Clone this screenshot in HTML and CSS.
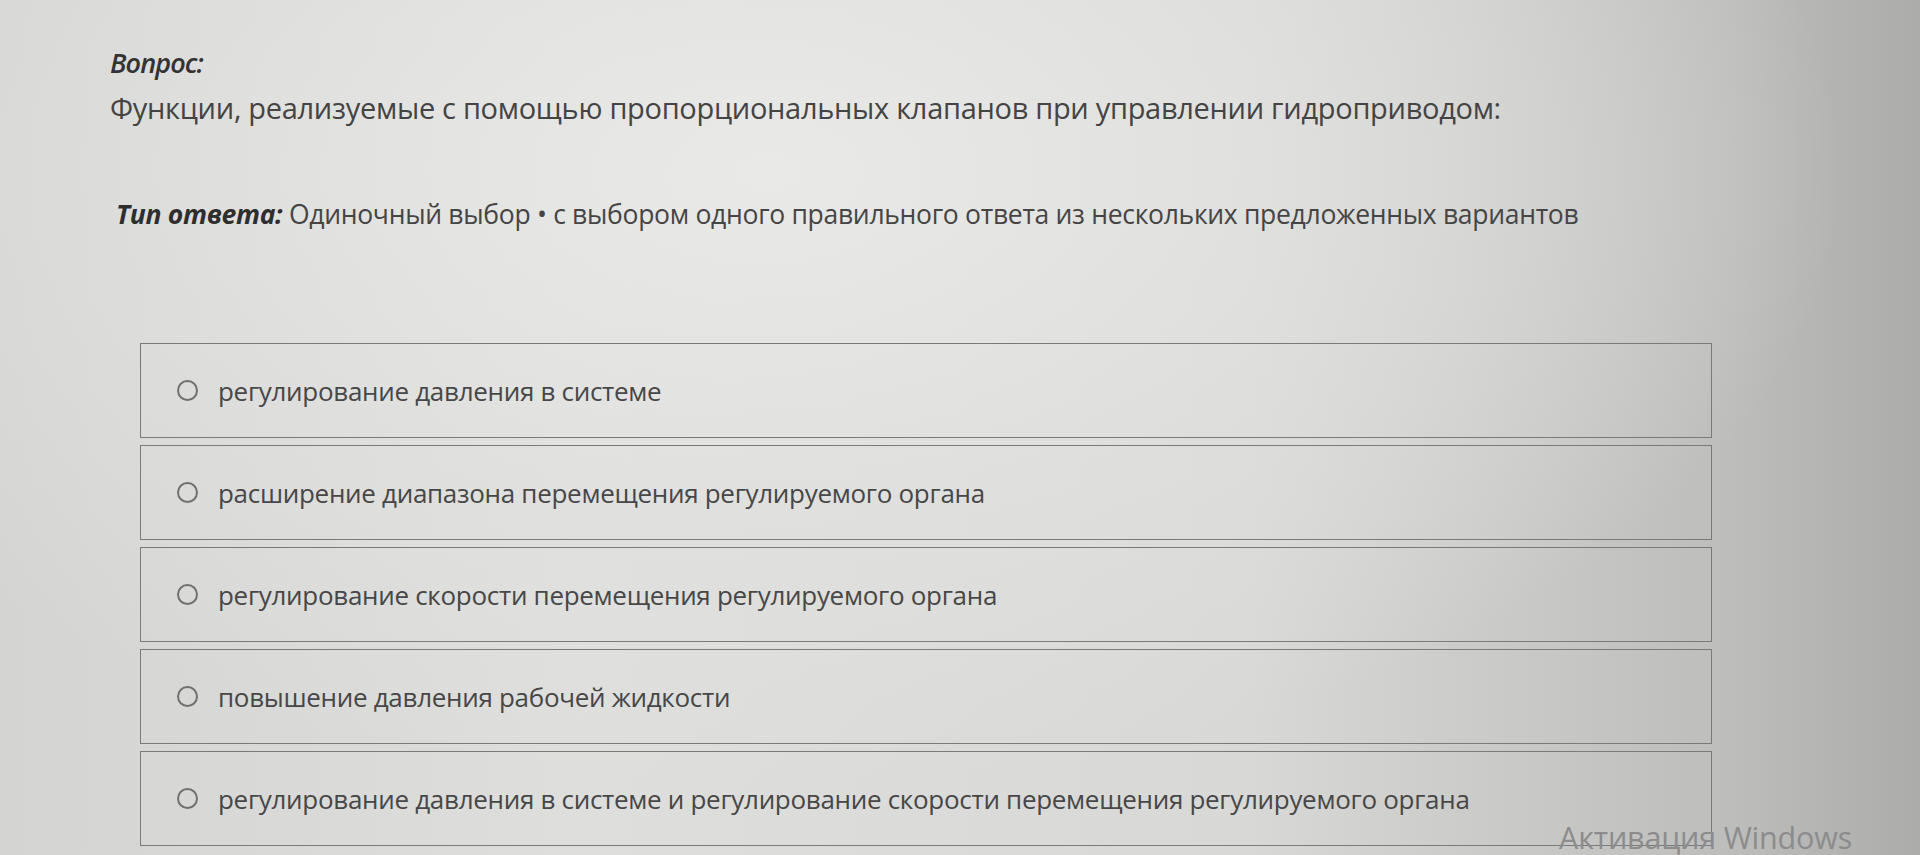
FILE: index.html
```html
<!DOCTYPE html>
<html lang="ru">
<head>
<meta charset="utf-8">
<title>Вопрос</title>
<link rel="stylesheet" href="styles.css">
</head>
<body>
<div class="page">
  <div class="label">Вопрос:</div>
  <div class="question">Функции, реализуемые с помощью пропорциональных клапанов при управлении гидроприводом:</div>
  <div class="type"><span class="type-label">Тип ответа:</span> Одиночный выбор • с выбором одного правильного ответа из нескольких предложенных вариантов</div>
  <div class="options">
    <label class="option"><span class="radio"></span><span class="text">регулирование давления в системе</span></label>
    <label class="option"><span class="radio"></span><span class="text">расширение диапазона перемещения регулируемого органа</span></label>
    <label class="option"><span class="radio"></span><span class="text">регулирование скорости перемещения регулируемого органа</span></label>
    <label class="option"><span class="radio"></span><span class="text">повышение давления рабочей жидкости</span></label>
    <label class="option"><span class="radio"></span><span class="text">регулирование давления в системе и регулирование скорости перемещения регулируемого органа</span></label>
  </div>
</div>
<div class="watermark">Активация Windows</div>
</body>
</html>
```
FILE: styles.css
```css
html, body {
  margin: 0;
  height: 100%;
  overflow: hidden;
}
body {
  font-family: "Open Sans", "Noto Sans", sans-serif;
  color: #3c3c3c;
  background:
    radial-gradient(ellipse 70% 90% at 40% 20%, rgba(233,233,231,1) 0%, rgba(226,226,224,0.6) 45%, rgba(200,200,198,0) 80%),
    linear-gradient(90deg, #d4d4d2 0%, #dededc 30%, #d8d8d6 65%, #bdbdbb 90%, #acacaa 100%);
  position: relative;
}
.page {
  padding: 46px 0 0 110px;
}
.label {
  font-style: italic;
  font-weight: 600;
  font-size: 27px;
  line-height: 34px;
  color: #333;
  letter-spacing: -0.9px;
}
.question {
  margin-top: 10px;
  font-size: 29px;
  line-height: 36px;
  color: #444;
  letter-spacing: -0.3px;
}
.type {
  margin-top: 70px;
  margin-left: 6px;
  font-size: 26.5px;
  line-height: 36px;
  color: #454545;
  letter-spacing: -0.3px;
}
.type-label {
  font-style: italic;
  font-weight: 700;
  color: #2e2e2e;
}
.options {
  margin-top: 111px;
  margin-left: 30px;
  width: 1572px;
  display: flex;
  flex-direction: column;
  gap: 7px;
}
.option {
  box-sizing: border-box;
  height: 95px;
  border: 1.5px solid #7a7a7a;
  display: flex;
  align-items: center;
  padding-left: 36px;
  gap: 20px;
  font-size: 26px;
  color: #474747;
  letter-spacing: -0.3px;
}
.radio {
  width: 17px;
  height: 17px;
  border: 2px solid #707070;
  border-radius: 50%;
  flex: none;
}
.watermark {
  position: absolute;
  right: 68px;
  bottom: 0;
  line-height: 36px;
  font-family: "Open Sans", "Noto Sans", sans-serif;
  font-size: 30.5px;
  color: #8c8c8c;
  letter-spacing: -0.2px;
}
```
